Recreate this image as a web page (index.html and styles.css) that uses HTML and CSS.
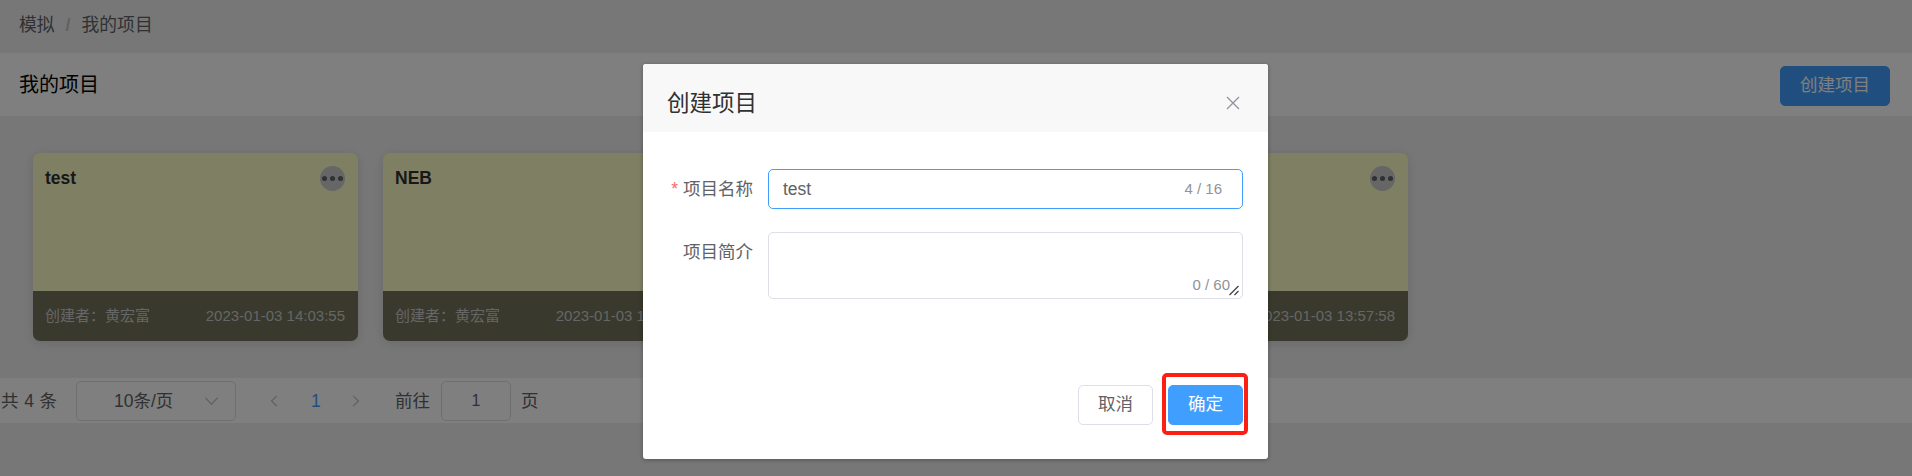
FILE: index.html
```html
<!DOCTYPE html>
<html lang="zh-CN">
<head>
<meta charset="utf-8">
<title>我的项目</title>
<link rel="stylesheet" href="styles.css">
</head>
<body>
<div class="page">
  <nav class="breadcrumb"><span>模拟</span><span class="separator">/</span><span>我的项目</span></nav>
  <header class="toolbar"><h1 class="toolbar-title">我的项目</h1><button class="btn btn-primary">创建项目</button></header>
  <main class="cards">
    <article class="card"><div class="card-body"><h2 class="card-title">test</h2><span class="more"><i></i><i></i><i></i></span></div><div class="card-foot"><span>创建者：黄宏富</span><span>2023-01-03 14:03:55</span></div></article>
    <article class="card"><div class="card-body"><h2 class="card-title">NEB</h2><span class="more"><i></i><i></i><i></i></span></div><div class="card-foot"><span>创建者：黄宏富</span><span>2023-01-03 14:00:00</span></div></article>
    <article class="card"><div class="card-body"></div><div class="card-foot"></div></article>
    <article class="card"><div class="card-body"><h2 class="card-title"></h2><span class="more"><i></i><i></i><i></i></span></div><div class="card-foot"><span></span><span>2023-01-03 13:57:58</span></div></article>
  </main>
  <footer class="pagination">
    <span class="total">共 4 条</span>
    <div class="select"><span class="select-text">10条/页</span><svg class="caret" viewBox="0 0 16 10"><path d="M1.5 1.5 8 8.5 14.500 1.500"/></svg></div>
    <svg class="arrow prev" viewBox="0 0 8 12"><path d="M6.800 1 1.500 6 6.800 11"/></svg>
    <span class="current">1</span>
    <svg class="arrow next" viewBox="0 0 8 12"><path d="M1.200 1 6.500 6 1.200 11"/></svg>
    <span class="goto">前往</span><span class="page-input">1</span><span class="goto-unit">页</span>
  </footer>
</div>
<div class="overlay">
  <section class="dialog">
    <header class="dialog-head"><h2 class="dialog-title">创建项目</h2><svg class="close" viewBox="0 0 14 14"><path d="M1 1 13 13M13 1 1 13"/></svg></header>
    <div class="dialog-body">
      <div class="field"><label class="label"><span class="required">*</span>项目名称</label><div class="input focused"><span>test</span><span class="count">4 / 16</span></div></div>
      <div class="field"><label class="label">项目简介</label><div class="textarea"><span class="count">0 / 60</span><svg class="grip" viewBox="0 0 12 12"><path d="M1.500 11 10.500 2M6.500 11 10.500 7"/></svg></div></div>
    </div>
    <footer class="dialog-foot"><button class="btn">取消</button><span class="confirm"><button class="btn btn-primary">确定</button></span></footer>
  </section>
</div>
</body>
</html>
```

FILE: styles.css
```css
* { box-sizing: border-box; }
body {
  margin: 0;
  height: 476px;
  overflow: hidden;
  background: #efefef;
  color: #606266;
  font: 17.5px/24px "Liberation Sans", "Noto Sans CJK SC", sans-serif;
}
h1, h2 { margin: 0; font-weight: 400; }
svg { display: block; fill: none; flex: none; }

.breadcrumb { display: flex; height: 53px; padding: 13px 20px 0 19px; font-size: 17.800px; }
.separator { margin: 0 11px; color: #c0c4cc; font-weight: 700; }
.toolbar {
  display: flex;
  align-items: center;
  justify-content: space-between;
  height: 63px;
  padding: 3px 22px 0 19px;
  background: #fff;
}
.toolbar-title { font-size: 20px; color: #000; margin-top: -3px; }
.btn {
  height: 40px;
  padding: 0 19px 3px;
  border: 1px solid #dcdfe6;
  border-radius: 5px;
  background: #fff;
  color: #606266;
  font: inherit;
}
.btn-primary { border-color: #409eff; background: #409eff; color: #fff; }

.cards { display: flex; gap: 25px; height: 262px; padding: 37px 33px; }
.card {
  display: flex;
  flex-direction: column;
  width: 325px;
  height: 188px;
  border-radius: 7px;
  overflow: hidden;
  background: #ffffc8;
  box-shadow: 0 2px 12px rgba(0, 0, 0, .12);
}
.card-body { display: flex; justify-content: space-between; flex: 1; padding: 13px 13px 0 12px; }
.card-title { font-size: 17.5px; font-weight: 700; color: #303133; }
.more {
  display: flex;
  align-items: center;
  justify-content: center;
  gap: 3px;
  width: 25px;
  height: 25px;
  border-radius: 50%;
  background: #ccc;
}
.more i { width: 5px; height: 5px; border-radius: 50%; background: #606266; }
.card-foot {
  display: flex;
  align-items: center;
  justify-content: space-between;
  height: 50px;
  padding: 0 13px 0 12px;
  background: rgba(0, 0, 0, .55);
  color: #ccc;
  font-size: 15px;
}

.pagination { display: flex; align-items: center; height: 45px; background: #fff; }
.total { width: 76px; padding-left: 1px; word-spacing: .8px; }
.select {
  display: flex;
  align-items: center;
  justify-content: space-between;
  width: 160px;
  height: 40px;
  padding: 0 16px 0 37px;
  border: 1px solid #dcdfe6;
  border-radius: 5px;
}
.caret { width: 15px; height: 10px; stroke: #c0c4cc; stroke-width: 1.300; }
.arrow { width: 8px; height: 12px; stroke: #c0c4cc; stroke-width: 1.300; }
.prev { margin-left: 34px; }
.current { width: 10px; margin: 0 31px 0 33px; color: #409eff; }
.goto { margin: 0 11px 0 35px; }
.page-input {
  width: 70px;
  height: 40px;
  border: 1px solid #dcdfe6;
  border-radius: 5px;
  font-size: 16px;
  line-height: 38px;
  text-align: center;
}
.goto-unit { margin-left: 10px; }

.overlay {
  position: absolute;
  inset: 0;
  display: flex;
  align-items: flex-start;
  justify-content: center;
  padding: 64px 1px 0 0;
  background: rgba(0, 0, 0, .5);
}
.dialog {
  display: flex;
  flex-direction: column;
  width: 625px;
  height: 395px;
  border-radius: 3px;
  background: #fff;
  box-shadow: 0 1px 4px rgba(0, 0, 0, .3);
}
.dialog-head {
  display: flex;
  align-items: center;
  justify-content: space-between;
  height: 68px;
  padding: 9px 28px 0 24px;
  background: #f8f8f8;
  border-radius: 3px 3px 0 0;
}
.dialog-title { padding-top: 2px; font-size: 22.5px; color: #303133; }
.close { width: 14px; height: 14px; stroke: #909399; stroke-width: 1.300; }
.dialog-body { display: flex; flex-direction: column; gap: 23px; flex: 1; padding: 37px 25px 0 24px; }
.field { display: flex; }
.label { width: 101px; padding: 8px 15px 0 0; text-align: right; }
.required { margin-right: 5px; color: #f56c6c; }
.input, .textarea { display: flex; flex: 1; border: 1px solid #dcdfe6; border-radius: 5px; }
.input { align-items: center; justify-content: space-between; height: 40px; padding: 0 20px 0 14px; }
.focused { border-color: #409eff; }
.textarea { align-items: flex-end; justify-content: flex-end; height: 67px; padding: 0 2px 1px; }
.count { color: #909399; font-size: 15px; }
.textarea .count { margin-right: -2px; }
.grip { width: 12px; height: 12px; margin-bottom: 1px; stroke: #444; stroke-width: 1.300; }
.dialog-foot { display: flex; justify-content: flex-end; gap: 15px; padding: 0 25px 34px; }
.confirm { position: relative; display: flex; }
.confirm::after {
  content: "";
  position: absolute;
  inset: -12px -5px -10px -6px;
  border: 4px solid #fb2013;
  border-radius: 5px;
}
```
